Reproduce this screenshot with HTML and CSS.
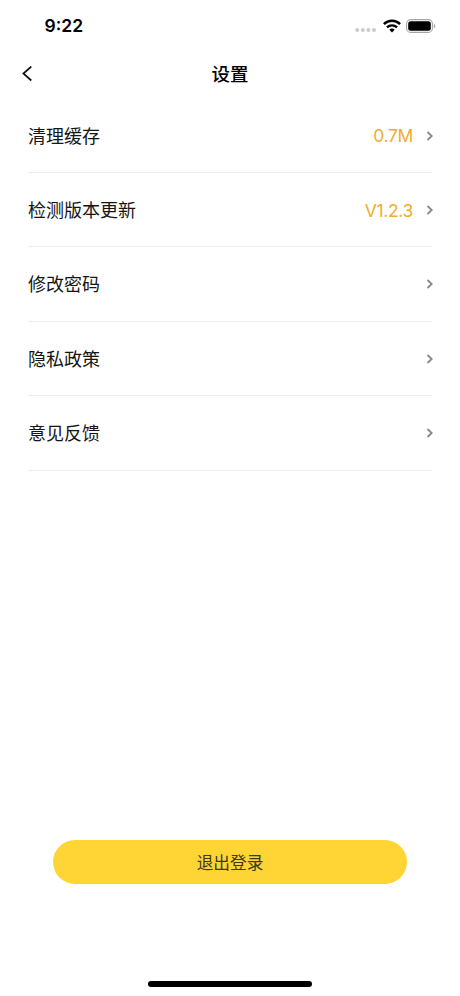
FILE: index.html
```html
<!DOCTYPE html>
<html lang="zh-CN">
<head>
<meta charset="utf-8">
<title>设置</title>
<link rel="stylesheet" href="styles.css">
</head>
<body>
<div class="screen">
  <div class="status">
    <span class="time">9:22</span>
    <div class="indicators">
      <svg class="signal" width="22" height="6" viewBox="0 0 22 6" fill="#cbcbcb"><circle cx="2.2" cy="3" r="2"/><circle cx="7.8" cy="3" r="2"/><circle cx="13.4" cy="3" r="2"/><circle cx="19" cy="3" r="2"/></svg>
      <svg class="wifi" width="18" height="14" viewBox="0 0 18 14" fill="none" stroke="#000" stroke-width="2.4"><path d="M.9 5.1a11.5 11.5 0 0 1 16.2 0M4 8.4a7.2 7.2 0 0 1 10 0"/><path d="M9 13.5 6.3 10.8a4 4 0 0 1 5.4 0z" fill="#000" stroke="none"/></svg>
      <svg class="battery" width="30" height="14" viewBox="0 0 30 14"><rect x=".6" y=".6" width="25.8" height="12.8" rx="4" fill="none" stroke="#a6a6a6" stroke-width="1.1"/><rect x="2.2" y="2.2" width="22.6" height="9.6" rx="2.5"/><path d="M27.8 4.7c2 .7 2 3.9 0 4.6z" fill="#a6a6a6"/></svg>
    </div>
  </div>
  <header class="navbar">
    <svg class="back" width="10" height="16" viewBox="0 0 10 16" fill="none" stroke="#111" stroke-width="1.7"><path d="M9.3 .5 1.4 7.5l7.9 7"/></svg>
    <h1 class="title">设置</h1>
  </header>
  <main class="list">
    <div class="row"><span class="label">清理缓存</span><span class="value">0.7M</span><svg class="chevron" viewBox="0 0 7 10"><path d="m1.5 1 4.2 4-4.2 4"/></svg></div>
    <div class="row"><span class="label">检测版本更新</span><span class="value">V1.2.3</span><svg class="chevron" viewBox="0 0 7 10"><path d="m1.5 1 4.2 4-4.2 4"/></svg></div>
    <div class="row"><span class="label">修改密码</span><svg class="chevron" viewBox="0 0 7 10"><path d="m1.5 1 4.2 4-4.2 4"/></svg></div>
    <div class="row"><span class="label">隐私政策</span><svg class="chevron" viewBox="0 0 7 10"><path d="m1.5 1 4.2 4-4.2 4"/></svg></div>
    <div class="row"><span class="label">意见反馈</span><svg class="chevron" viewBox="0 0 7 10"><path d="m1.5 1 4.2 4-4.2 4"/></svg></div>
  </main>
  <button class="logout">退出登录</button>
  <div class="home"></div>
</div>
</body>
</html>
```
FILE: styles.css
```css
* { box-sizing: border-box; }
body { margin: 0; background: #fff; font-family: Inter, "Noto Sans CJK SC", sans-serif; color: #151515; }
.screen { height: 996px; display: flex; flex-direction: column; }
.status { height: 49px; display: flex; justify-content: space-between; padding: 14px 24px 0 44.5px; }
.time { font-size: 17.5px; line-height: 24px; font-weight: 600; color: #000; }
.indicators { display: flex; align-items: center; height: 23px; gap: 5.5px; }
.signal { margin-top: 9px; }
.navbar { height: 49.4px; display: grid; grid-template-columns: 40px 1fr 40px; align-items: center; padding: 0 22px; }
.title { margin: 0; text-align: center; font-size: 18.5px; line-height: 28px; font-weight: 500; color: #000; }
.list { padding: 0 28px; flex: 1; }
.row { height: 74.45px; display: flex; align-items: center; border-bottom: 1px solid #eee; font-size: 18px; line-height: 26px; }
.label { padding-top: 3px; }
.value { margin-left: auto; padding-top: 2px; color: #f2ab30; font-size: 17.5px; letter-spacing: -.35px; }
.chevron { width: 7px; height: 10px; margin: 1px -.5px 0 auto; fill: none; stroke: #888; stroke-width: 1.8; }
.value + .chevron { margin-left: 12.5px; }
.logout { height: 44px; margin: 0 53px; padding: 2px 0 0; border: 0; border-radius: 22px; background: #fed535; color: #40391f; font: inherit; font-size: 16.7px; line-height: 24px; }
.home { width: 164px; height: 5.5px; margin: 97px auto 9.5px; border-radius: 3px; background: #000; }
```
